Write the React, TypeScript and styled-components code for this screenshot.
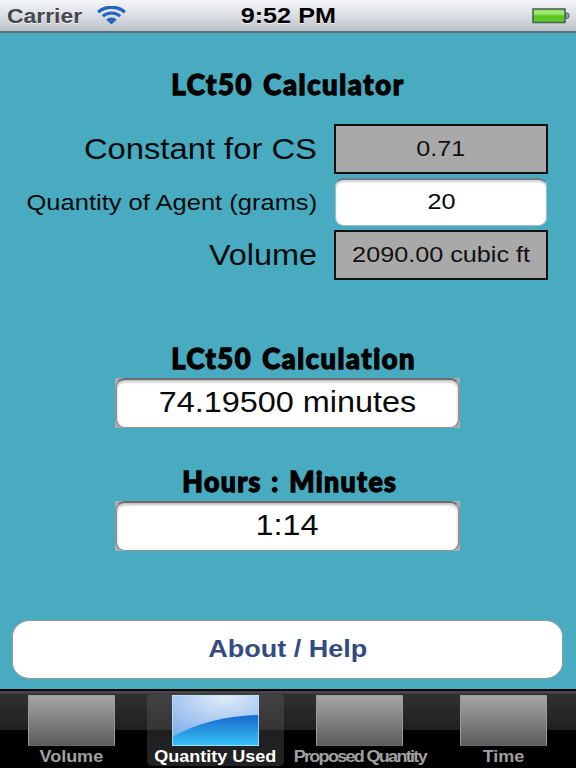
import React from "react";
import styled, { createGlobalStyle, css } from "styled-components";

const Global = createGlobalStyle`
  * { box-sizing: border-box; }
  html, body { margin: 0; padding: 0; overflow: hidden; background: #48abbf; }
`;

const Screen = styled.main`
  display: flex;
  flex-direction: column;
  width: 576px;
  height: 768px;
  background: #48abbf;
  font-family: "Liberation Sans", Arial, sans-serif;
  color: #060a0c;
`;

const Wide = styled.span<{ $from?: string; $x?: number; $gap?: number }>`
  display: inline-block;
  white-space: nowrap;
  transform: scaleX(${(p) => p.$x ?? 1.125});
  transform-origin: ${(p) => p.$from ?? "center"};
  letter-spacing: ${(p) => p.$gap ?? 0}px;
`;

const StatusBar = styled.header`
  display: grid;
  grid-template-columns: 1fr auto 1fr;
  align-items: center;
  flex: none;
  height: 33px;
  padding: 1px 6px 1px 6px;
  border-bottom: 2px solid #5d6f78;
  background: linear-gradient(#f3f5f7, #e3e6ea 35%, #c9cdd4 80%, #bcc1c8);
  font-size: 22.4px;
  font-weight: bold;
  line-height: 29px;
  color: #000;
  text-shadow: 0 1px 0 rgba(255, 255, 255, 0.7);
`;

const Carrier = styled.div`
  display: flex;
  align-items: center;
  gap: 21px;
  padding-left: 1px;
  font-size: 21px;
  color: #45484c;
`;

const BatteryBox = styled.div`
  display: flex;
  justify-content: flex-end;
`;

const Content = styled.section`
  display: flex;
  flex-direction: column;
  align-items: center;
  flex: none;
  height: 656px;
  padding-top: 35px;
`;

const Heading = styled.h2<{ $shift?: number }>`
  margin: 0;
  padding-left: ${(p) => p.$shift ?? 0}px;
  height: 34px;
  line-height: 34px;
  font-family: Lato, "Open Sans", sans-serif;
  font-size: 27.5px;
  font-weight: 900;
  font-variant-ligatures: none;
  word-spacing: 2px;
  color: #000;
  -webkit-text-stroke: 1.3px #000;
`;

const Form = styled.div`
  display: grid;
  grid-template-columns: 317px 214px;
  grid-template-rows: 50px 48px 50px;
  row-gap: 4px;
  column-gap: 17px;
  width: 576px;
  margin: 22px 0 62px;
`;

const Label = styled.div<{ $small?: boolean }>`
  display: flex;
  align-items: center;
  justify-content: flex-end;
  padding-top: ${(p) => (p.$small ? 2 : 0)}px;
  font-size: ${(p) => (p.$small ? 22.4 : 28.8)}px;
`;

const field = css`
  display: flex;
  align-items: center;
  justify-content: center;
`;

const ReadOnly = styled.div`
  ${field}
  border: 2px solid #101010;
  background: #a9a9a9;
  font-size: 22.4px;
  color: #111;
  padding-bottom: 1px;
`;

const Entry = styled.div`
  ${field}
  margin: 0 1px;
  padding-bottom: 1px;
  border-radius: 9px / 8px;
  border: 1px solid #a4bcc4;
  border-top: 2px solid #6d7f87;
  background: #fff;
  box-shadow: inset 0 2px 2px rgba(0, 0, 0, 0.18);
  font-size: 22.4px;
`;

const ResultFrame = styled.div`
  width: 345px;
  height: 50px;
  margin-right: 1px;
  background: #a9b0b3;
`;

const Result = styled.div`
  ${field}
  height: 100%;
  padding-bottom: 3px;
  border: 1px solid #929292;
  border-width: 2px 2px 1px;
  border-top-color: #6b6b6b;
  border-radius: 10px / 9px;
  background: #fff;
  box-shadow: inset 0 2px 3px rgba(0, 0, 0, 0.25);
  font-size: 28.8px;
`;

const ResultGroup = styled.div`
  display: flex;
  flex-direction: column;
  align-items: center;
  gap: 2px;
  margin-bottom: 37px;
`;

const HelpButton = styled.button`
  width: 551px;
  height: 59px;
  margin: 32px 1px 0 0;
  padding: 0 0 1px 1px;
  border: 1px solid #93989c;
  border-radius: 18px / 16px;
  background: #fff;
  font: bold 24px "Liberation Sans", Arial, sans-serif;
  color: #344a82;
`;

const TabBar = styled.nav`
  display: flex;
  flex: 1;
  border-top: 2px solid #000;
  background: linear-gradient(#484848 0 2px, #303030 3px, #202020 39px, #000 39px);
`;

const Tab = styled.div<{ $active?: boolean }>`
  display: flex;
  flex-direction: column;
  align-items: center;
  width: 137px;
  height: 72px;
  margin: 3px 4px 0 3px;
  padding-top: 1px;
  border-radius: 5px;
  background: ${(p) =>
    p.$active ? "linear-gradient(#424242, #353535 36px, #202020 36px, #222)" : "transparent"};
  font-size: 16px;
  font-weight: bold;
  line-height: 22px;
  color: ${(p) => (p.$active ? "#fff" : "#a0a0a0")};

  > * {
    flex: none;
  }
`;

const Tile = styled.div`
  width: 87px;
  height: 51px;
  border: 1px solid #9a9a9a;
  border-bottom-color: #666;
  background: linear-gradient(#a5a5a5, #5c5c5c);
`;

const Wifi = () => (
  <svg width="29" height="19" viewBox="0 0 29 19" fill="none" stroke="#2467bd">
    <path d="M1.2 6.3C8-.4 21-.4 27.8 6.3" strokeWidth="3.3" />
    <path d="M5.8 10.2c4.7-4.4 12.7-4.4 17.4 0" strokeWidth="3" />
    <path d="M9.3 13.8c2.8-3.2 7.6-3.2 10.4 0l-5.2 4.6z" fill="#2467bd" stroke="none" />
  </svg>
);

const Battery = () => (
  <svg width="38" height="16" viewBox="0 0 38 16">
    <defs>
      <linearGradient id="charge" x2="0" y2="1">
        <stop stopColor="#8ada59" />
        <stop offset=".3" stopColor="#a5ee73" />
        <stop offset=".55" stopColor="#55c51d" />
        <stop offset="1" stopColor="#66cb30" />
      </linearGradient>
    </defs>
    <rect x="1" y="1" width="32" height="13.5" fill="url(#charge)" stroke="#4c6357" strokeWidth="1.6" />
    <path d="M34 5h1.5q1.5 0 1.5 2.7t-1.5 2.8H34z" fill="#9fa8b0" stroke="#4d5560" />
  </svg>
);

const GlossyTile = () => (
  <svg width="87" height="51" viewBox="0 0 87 51">
    <defs>
      <radialGradient id="sheen" cx=".6" cy="0" r=".9">
        <stop stopColor="#e3edfb" />
        <stop offset="1" stopColor="#86b1ea" />
      </radialGradient>
      <linearGradient id="deep" x2="0" y2="1">
        <stop stopColor="#1768cd" />
        <stop offset="1" stopColor="#38c4f5" />
      </linearGradient>
    </defs>
    <rect width="87" height="51" fill="url(#sheen)" />
    <path d="M0 42Q38 21 87 20V51H0z" fill="url(#deep)" />
    <rect x=".5" y=".5" width="86" height="50" fill="none" stroke="#b9e6fc" strokeOpacity=".75" />
  </svg>
);

const tabs = [
  { name: "Volume" },
  { name: "Quantity Used", active: true },
  { name: "Proposed Quantity", gap: -1.5 },
  { name: "Time" },
];

export default function App() {
  return (
    <>
      <Global />
      <Screen>
        <StatusBar>
          <Carrier>
            <Wide $from="left" $x={1.09}>Carrier</Wide>
            <Wifi />
          </Carrier>
          <Wide>9:52 PM</Wide>
          <BatteryBox><Battery /></BatteryBox>
        </StatusBar>
        <Content>
          <Heading><Wide $x={1} $gap={1.6}>LCt50 Calculator</Wide></Heading>
          <Form>
            <Label><Wide $from="right" $x={1.137}>Constant for CS</Wide></Label>
            <ReadOnly><Wide>0.71</Wide></ReadOnly>
            <Label $small><Wide $from="right" $x={1.139}>Quantity of Agent (grams)</Wide></Label>
            <Entry><Wide>20</Wide></Entry>
            <Label><Wide $from="right">Volume</Wide></Label>
            <ReadOnly><Wide>2090.00 cubic ft</Wide></ReadOnly>
          </Form>
          <ResultGroup>
            <Heading $shift={11}><Wide $x={0.99} $gap={1.6}>LCt50 Calculation</Wide></Heading>
            <ResultFrame><Result><Wide>74.19500 minutes</Wide></Result></ResultFrame>
          </ResultGroup>
          <ResultGroup>
            <Heading $shift={3}><Wide $x={0.97} $gap={1.4}>Hours : Minutes</Wide></Heading>
            <ResultFrame><Result><Wide>1:14</Wide></Result></ResultFrame>
          </ResultGroup>
          <HelpButton><Wide>About / Help</Wide></HelpButton>
        </Content>
        <TabBar>
          {tabs.map((t) => (
            <Tab key={t.name} $active={t.active}>
              {t.active ? <GlossyTile /> : <Tile />}
              <Wide $gap={t.gap}>{t.name}</Wide>
            </Tab>
          ))}
        </TabBar>
      </Screen>
    </>
  );
}
